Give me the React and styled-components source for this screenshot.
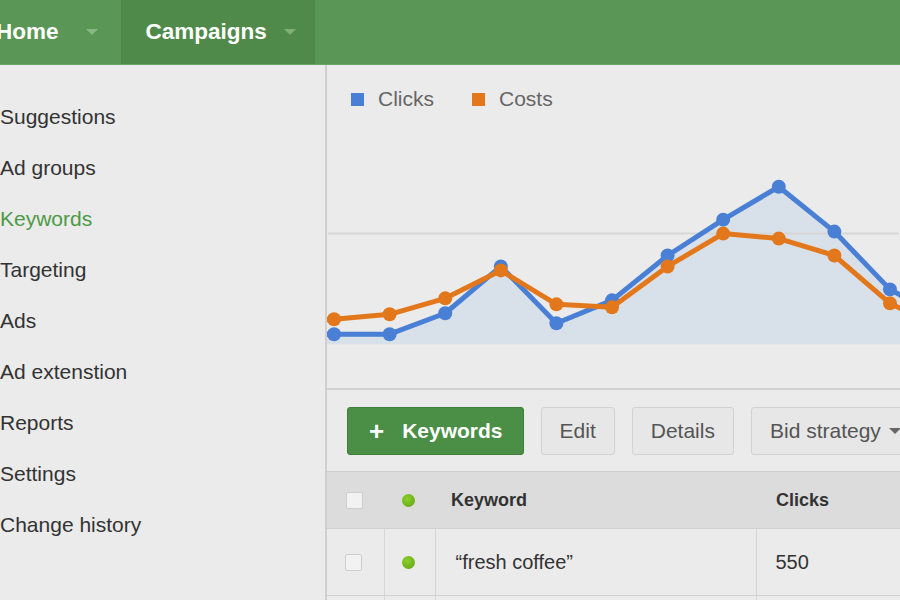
import React from "react";
import styled, { createGlobalStyle } from "styled-components";

const GlobalStyle = createGlobalStyle`
  html, body {
    margin: 0;
    padding: 0;
    width: 900px;
    height: 600px;
    overflow: hidden;
    background: #ebebeb;
    font-family: "Liberation Sans", Arial, sans-serif;
  }
`;

const Page = styled.div`
  width: 900px;
  height: 600px;
  display: flex;
  flex-direction: column;
  overflow: hidden;
`;

const TopBar = styled.header`
  height: 64px;
  flex-shrink: 0;
  display: flex;
  background: #5a9655;
  border-bottom: 1px solid #6aa665;
`;

const Nav = styled.nav`
  display: flex;
  margin-left: -29px;
`;

const Tab = styled.div`
  display: flex;
  align-items: center;
  padding: 0 ${(p) => p.$right || 19}px 0 25px;
  background: ${(p) => (p.$active ? "#4f8a4a" : "#5a9655")};
  color: #fff;
  font-size: 22.5px;
  font-weight: bold;
`;

const Caret = styled.span`
  display: inline-block;
  margin-left: ${(p) => p.$gap}px;
  width: 0;
  height: 0;
  border-left: 6px solid transparent;
  border-right: 6px solid transparent;
  border-top: 6px solid ${(p) => p.$color || "#86b981"};
`;

const Body = styled.div`
  flex: 1;
  display: flex;
  min-height: 0;
`;

const Sidebar = styled.aside`
  width: 327px;
  flex-shrink: 0;
  padding-top: 26px;
  border-right: 2px solid #cfcfcf;
  box-sizing: border-box;
`;

const NavItem = styled.div`
  font-size: 21px;
  line-height: 51px;
  color: ${(p) => (p.$active ? "#4c9a47" : "#333")};
`;

const Main = styled.main`
  flex: 1;
  min-width: 0;
  display: flex;
  flex-direction: column;
`;

const ChartPanel = styled.section`
  height: 323px;
  flex-shrink: 0;
  display: flex;
  flex-direction: column;
  border-bottom: 2px solid #d2d2d2;
  overflow: hidden;
`;

const Legend = styled.div`
  display: flex;
  align-items: center;
  gap: 38px;
  padding: 23px 0 0 24px;
  height: 22px;
`;

const LegendItem = styled.div`
  display: flex;
  align-items: center;
  gap: 14px;
  font-size: 21px;
  color: #666;
`;

const Swatch = styled.span`
  width: 13px;
  height: 13px;
  background: ${(p) => p.$color};
`;

const ChartSvg = styled.svg`
  display: block;
  margin-top: 11px;
`;

const Toolbar = styled.div`
  display: flex;
  gap: 17px;
  padding: 17px 0 16px 20px;
  border-bottom: 1px solid #cfcfcf;
`;

const Button = styled.div`
  height: 48px;
  box-sizing: border-box;
  display: flex;
  align-items: center;
  gap: 18px;
  border-radius: 3px;
  font-size: 21px;
  white-space: nowrap;
  flex-shrink: 0;
  background: ${(p) => (p.$primary ? "#4b8e46" : "#e7e7e7")};
  border: 1px solid ${(p) => (p.$primary ? "#3f7d3a" : "#d2d2d2")};
  color: ${(p) => (p.$primary ? "#fff" : "#555")};
  font-weight: ${(p) => (p.$primary ? "bold" : "normal")};
  padding: 0 ${(p) => (p.$primary ? 20 : 18)}px 0 ${(p) => (p.$primary ? 21 : 18)}px;
`;

const Plus = styled.span`
  font-size: 26px;
  line-height: 1;
  font-weight: bold;
`;

const Table = styled.table`
  border-collapse: collapse;
  width: 100%;
`;

const HeadCell = styled.th`
  height: 56px;
  background: #dcdcdc;
  text-align: left;
  font-size: 18px;
  font-weight: bold;
  color: #333;
  padding: 0 0 0 ${(p) => p.$pad || 0}px;
  width: ${(p) => (p.$w ? p.$w + "px" : "auto")};
  border-bottom: 1px solid #d0d0d0;
`;

const Cell = styled.td`
  height: 66px;
  font-size: 20px;
  color: #333;
  padding: 0 0 0 ${(p) => p.$pad || 0}px;
  border-right: 1px solid #d6d6d6;
  border-bottom: 1px solid #d0d0d0;
  &:last-child {
    border-right: none;
  }
`;

const Center = styled.div`
  display: flex;
  justify-content: center;
  align-items: center;
  padding-right: 3px;
`;

const Check = styled.span`
  width: 17px;
  height: 17px;
  box-sizing: border-box;
  background: #f2f2f2;
  border: 1px solid #cecece;
  border-radius: 2px;
`;

const Dot = styled.span`
  width: 13px;
  height: 13px;
  border-radius: 50%;
  background: radial-gradient(circle at 40% 35%, #8ccf2a, #5fa212);
`;

const blue = [214, 214, 214, 193, 146, 203, 180, 135, 99, 66, 111, 169, 200];
const orange = [202, 199, 194, 178, 150, 184, 187, 146, 113, 118, 135, 183, 210];
const xs = blue.map((_, i) => 6 + (i - 1) * 55.8);

const pts = (ys) => ys.map((y, i) => `${xs[i]},${y}`).join(" ");

const Chart = () => {
  const area = `${xs[0]},224 ${pts(blue)} ${xs[xs.length - 1]},224`;
  return (
    <ChartSvg width="573" height="268" viewBox="0 0 573 268">
      <polygon points={area} fill="#d8e0ea" />
      <line x1="0" y1="113" x2="573" y2="113" stroke="#d7d7d7" strokeWidth="2" />
      <polyline points={pts(blue)} fill="none" stroke="#4a7fd6" strokeWidth="5" strokeLinejoin="round" />
      {blue.map((y, i) => (
        <circle key={"b" + i} cx={xs[i]} cy={y} r="7" fill="#4a7fd6" />
      ))}
      <polyline points={pts(orange)} fill="none" stroke="#e2781b" strokeWidth="5" strokeLinejoin="round" />
      {orange.map((y, i) => (
        <circle key={"o" + i} cx={xs[i]} cy={y} r="7" fill="#e2781b" />
      ))}
    </ChartSvg>
  );
};

const menu = [
  "Suggestions",
  "Ad groups",
  "Keywords",
  "Targeting",
  "Ads",
  "Ad extenstion",
  "Reports",
  "Settings",
  "Change history",
];

export default function App() {
  return (
    <Page>
      <GlobalStyle />
      <TopBar>
        <Nav>
          <Tab $right={23}>
            Home
            <Caret $gap={27} />
          </Tab>
          <Tab $active>
            Campaigns
            <Caret $gap={17} $color="#7fae79" />
          </Tab>
        </Nav>
      </TopBar>
      <Body>
        <Sidebar>
          {menu.map((m) => (
            <NavItem key={m} $active={m === "Keywords"}>
              {m}
            </NavItem>
          ))}
        </Sidebar>
        <Main>
          <ChartPanel>
            <Legend>
              <LegendItem>
                <Swatch $color="#4a7fd6" />
                Clicks
              </LegendItem>
              <LegendItem>
                <Swatch $color="#e2781b" />
                Costs
              </LegendItem>
            </Legend>
            <Chart />
          </ChartPanel>
          <Toolbar>
            <Button $primary>
              <Plus>+</Plus>
              Keywords
            </Button>
            <Button>Edit</Button>
            <Button>Details</Button>
            <Button>
              Bid strategy
              <Caret $gap={-10} $color="#666" />
            </Button>
          </Toolbar>
          <Table>
            <thead>
              <tr>
                <HeadCell $w={57}>
                  <Center>
                    <Check />
                  </Center>
                </HeadCell>
                <HeadCell $w={51}>
                  <Center>
                    <Dot />
                  </Center>
                </HeadCell>
                <HeadCell $w={305} $pad={16}>
                  Keyword
                </HeadCell>
                <HeadCell $pad={20}>Clicks</HeadCell>
              </tr>
            </thead>
            <tbody>
              <tr>
                <Cell>
                  <Center>
                    <Check />
                  </Center>
                </Cell>
                <Cell>
                  <Center>
                    <Dot />
                  </Center>
                </Cell>
                <Cell $pad={20}>“fresh coffee”</Cell>
                <Cell $pad={19}>550</Cell>
              </tr>
              <tr>
                <Cell>&nbsp;</Cell>
                <Cell />
                <Cell />
                <Cell />
              </tr>
            </tbody>
          </Table>
        </Main>
      </Body>
    </Page>
  );
}
